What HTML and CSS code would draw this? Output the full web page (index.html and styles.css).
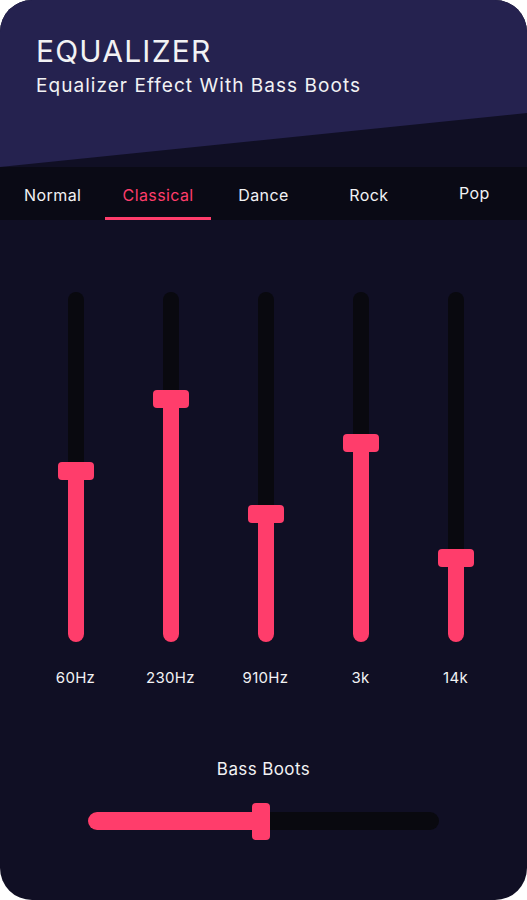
FILE: index.html
```html
<!DOCTYPE html>
<html lang="en">
<head>
    <meta charset="UTF-8">
    <meta name="viewport" content="width=device-width, initial-scale=1.0">
    <title>Equalizer</title>
    <link rel="stylesheet" href="styles.css">
</head>
<body>

    <div class="card">
        <div class="header">
            <h1 class="title">EQUALIZER</h1>
            <p class="subtitle">Equalizer Effect With Bass Boots</p>
        </div>

        <div class="tabs">
            <div class="tab">Normal</div>
            <div class="tab active">Classical</div>
            <div class="tab">Dance</div>
            <div class="tab">Rock</div>
            <div class="tab pop">Pop</div>
        </div>

        <div class="bands">
            <div class="band">
                <div class="track">
                    <div class="fill" style="height: 180px"><div class="thumb"></div></div>
                </div>
                <p class="band-label">60Hz</p>
            </div>
            <div class="band">
                <div class="track">
                    <div class="fill" style="height: 252px"><div class="thumb"></div></div>
                </div>
                <p class="band-label">230Hz</p>
            </div>
            <div class="band">
                <div class="track">
                    <div class="fill" style="height: 137px"><div class="thumb"></div></div>
                </div>
                <p class="band-label">910Hz</p>
            </div>
            <div class="band">
                <div class="track">
                    <div class="fill" style="height: 208px"><div class="thumb"></div></div>
                </div>
                <p class="band-label">3k</p>
            </div>
            <div class="band">
                <div class="track">
                    <div class="fill" style="height: 93px"><div class="thumb"></div></div>
                </div>
                <p class="band-label">14k</p>
            </div>
        </div>

        <div class="bass">
            <p class="bass-label">Bass Boots</p>
            <div class="bass-track">
                <div class="bass-fill" style="width: 182px"><div class="bass-thumb"></div></div>
            </div>
        </div>
    </div>

</body>
</html>
```

FILE: styles.css
```css
body {
    margin: 0;
    background: #fff;
    font-family: "Inter", "Noto Sans", sans-serif;
    color: #f2f2f4;
}

.card {
    width: 527px;
    height: 900px;
    background: #100f24;
    border-radius: 32px;
    overflow: hidden;
    display: flex;
    flex-direction: column;
}

.header {
    height: 167px;
    box-sizing: border-box;
    padding: 33px 0 0 36px;
    background: #25224f;
    clip-path: polygon(0 0, 100% 0, 100% 113px, 0 100%);
}

.title {
    margin: 0;
    font-size: 30px;
    font-weight: 400;
    letter-spacing: 1.2px;
    line-height: 36px;
}

.subtitle {
    margin: 5px 0 0;
    font-size: 19px;
    letter-spacing: 1.05px;
    line-height: 24px;
}

.tabs {
    display: flex;
    height: 53px;
    background: #0a0a15;
}

.tab {
    flex: 1;
    display: flex;
    justify-content: center;
    align-items: center;
    font-size: 16px;
    letter-spacing: 0.4px;
    box-sizing: border-box;
    padding-top: 2px;
}

.tab.pop {
    padding-top: 0;
    padding-bottom: 2px;
}

.tab.active {
    color: #ff3d6b;
    border-bottom: 3px solid #ff3d6b;
    padding-top: 5px;
}

.bands {
    display: flex;
    padding: 72px 24px 0 28px;
}

.band {
    width: 95px;
    display: flex;
    flex-direction: column;
    align-items: center;
}

.track {
    position: relative;
    width: 16px;
    height: 350px;
    background: #09090f;
    border-radius: 8px;
}

.fill {
    position: absolute;
    left: 0;
    right: 0;
    bottom: 0;
    background: #ff3d6b;
    border-radius: 8px;
}

.thumb {
    position: absolute;
    top: 0;
    left: 50%;
    width: 36px;
    height: 18px;
    margin-left: -18px;
    background: #ff3d6b;
    border-radius: 4px;
}

.band-label {
    margin: 27px 0 0;
    font-size: 15px;
    letter-spacing: 0.3px;
    line-height: 18px;
}

.bass {
    display: flex;
    flex-direction: column;
    align-items: center;
    padding-top: 72px;
}

.bass-label {
    margin: 0 0 33px;
    font-size: 17px;
    letter-spacing: 0.4px;
    line-height: 20px;
}

.bass-track {
    position: relative;
    width: 351px;
    height: 18px;
    background: #09090f;
    border-radius: 9px;
}

.bass-fill {
    position: absolute;
    left: 0;
    top: 0;
    bottom: 0;
    background: #ff3d6b;
    border-radius: 9px;
}

.bass-thumb {
    position: absolute;
    right: 0;
    top: 50%;
    width: 18px;
    height: 37px;
    margin-top: -18px;
    background: #ff3d6b;
    border-radius: 4px;
}
```
